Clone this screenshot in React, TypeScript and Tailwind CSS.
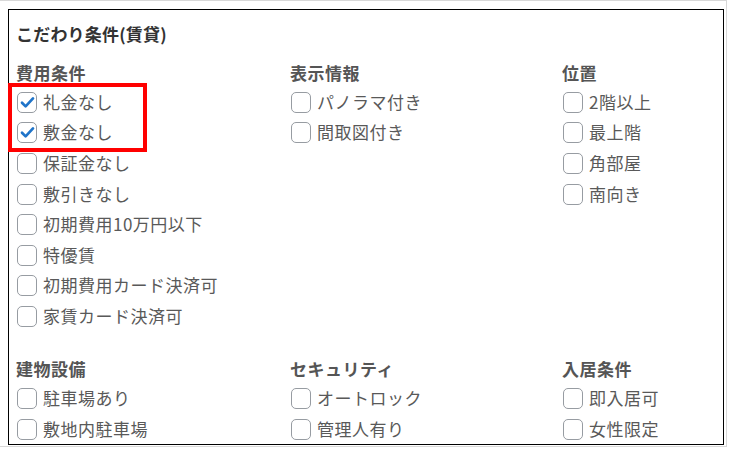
import React from "react";

const font = { fontFamily: '"Noto Sans CJK JP", "Noto Sans", sans-serif' };

function Box({ checked }: { checked?: boolean }) {
  return (
    <span className="relative inline-flex h-[21px] w-[20px] shrink-0 items-center justify-center rounded-[5px] border-[1.5px] border-[#979ca2] bg-white">
      {checked && (
        <svg width="15" height="13" viewBox="0 0 15 13" fill="none">
          <path d="M2 6.8 L5.6 10.4 L13 2.4" stroke="#1f74c9" strokeWidth="2.7" strokeLinecap="round" strokeLinejoin="round" />
        </svg>
      )}
    </span>
  );
}

function Item({ label, checked }: { label: string; checked?: boolean }) {
  return (
    <div className="flex h-[30.6px] items-center pl-[1px]">
      <Box checked={checked} />
      <span className="ml-[6px] -mt-[2px] text-[17px] leading-none tracking-[0.5px] text-[#595959]">{label}</span>
    </div>
  );
}

function Group({ title, items, checked = [] }: { title: string; items: string[]; checked?: number[] }) {
  return (
    <div>
      <div className="flex h-[29px] items-center text-[17px] font-bold tracking-[0.5px] text-[#555]">{title}</div>
      {items.map((it, i) => (
        <Item key={it} label={it} checked={checked.includes(i)} />
      ))}
    </div>
  );
}

export default function App() {
  return (
    <div className="relative h-[459px] w-[736px] bg-white" style={font}>
      <div className="pointer-events-none absolute left-[0px] top-[0px] h-[447px] w-[727px] border-r border-b border-t border-[#d8d8d8]" />
      <div className="absolute left-[8px] top-[9px] h-[436px] w-[716px] overflow-hidden border border-black bg-white pl-[7px] pt-[12px]">
        <div className="flex h-[24px] items-center text-[17px] font-bold tracking-[0.2px] text-[#333]">こだわり条件(賃貸)</div>
        <div className="mt-[12px] grid grid-cols-[274px_272px_1fr]">
          <Group
            title="費用条件"
            checked={[0, 1]}
            items={["礼金なし", "敷金なし", "保証金なし", "敷引きなし", "初期費用10万円以下", "特優賃", "初期費用カード決済可", "家賃カード決済可"]}
          />
          <Group title="表示情報" items={["パノラマ付き", "間取図付き"]} />
          <Group title="位置" items={["2階以上", "最上階", "角部屋", "南向き"]} />
        </div>
        <div className="mt-[22.4px] grid grid-cols-[274px_272px_1fr]">
          <Group title="建物設備" items={["駐車場あり", "敷地内駐車場"]} />
          <Group title="セキュリティ" items={["オートロック", "管理人有り"]} />
          <Group title="入居条件" items={["即入居可", "女性限定"]} />
        </div>
      </div>
      <div className="pointer-events-none absolute left-[8px] top-[83px] h-[69px] w-[139px] border-[4px] border-[#ff0000]" />
    </div>
  );
}
